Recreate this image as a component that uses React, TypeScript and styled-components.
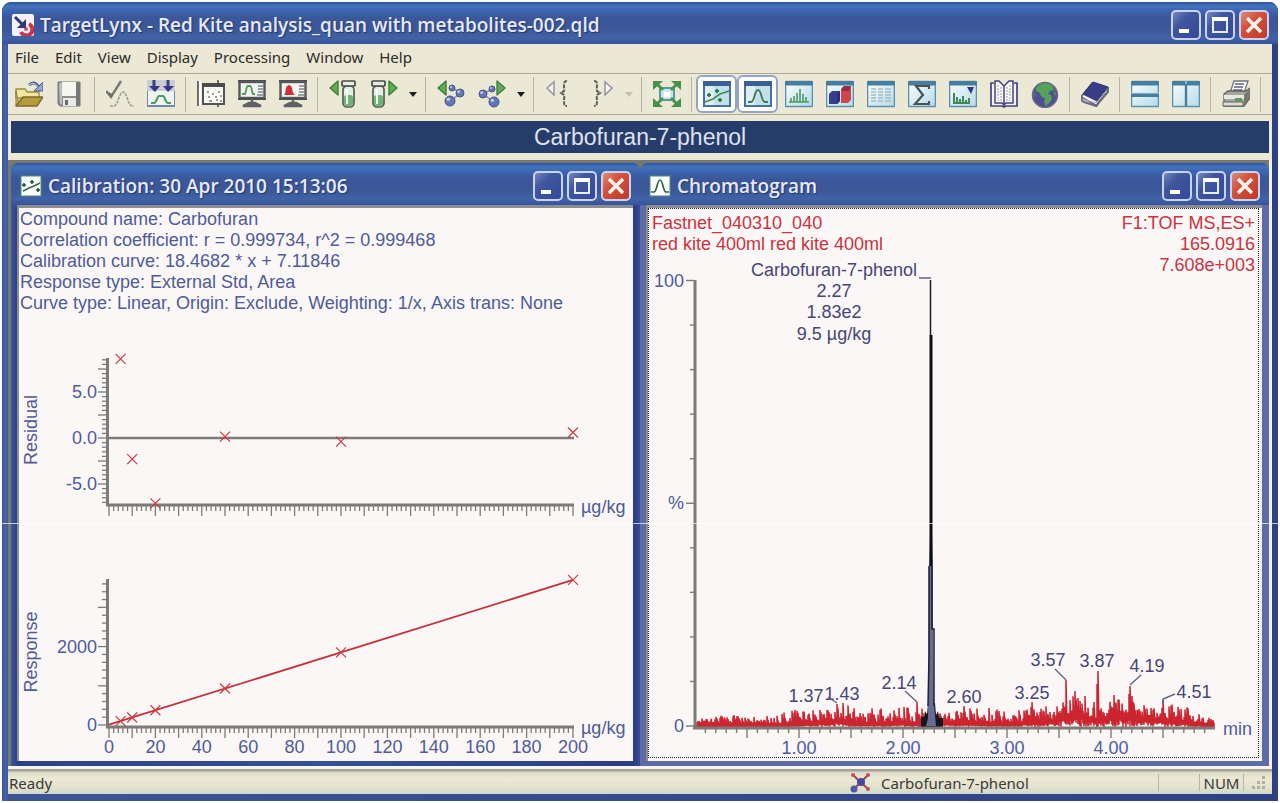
import React from "react";
import styled, { createGlobalStyle, css } from "styled-components";

const sans = `"Liberation Sans", Arial, sans-serif`;
const ui = `"Noto Sans", Tahoma, sans-serif`;
const caption = `"Open Sans", "Trebuchet MS", sans-serif`;

const cream = "#ebe8d5";
const paper = "#fbf7f6";
const navyInk = "#4f5b9a";
const peakInk = "#464676";
const axisGray = "#7b7b79";
const red = "#cf3a42";

const GlobalStyle = createGlobalStyle`
  * { box-sizing: border-box; }
  body { margin: 0; background: #fff; }
  button { font: inherit; color: inherit; border: 0; padding: 0; background: none; }
  p { margin: 0; }
`;

/* ---------- window chrome ---------- */

const titleFill = css`
  background: linear-gradient(#2d529c 0, #4273bd 4px, #3c64ad 9px, #3b5699 16px, #3c5899 28px, #4063a6 36px, #36529a 100%);
`;

const Page = styled.div`
  position: relative;
  min-height: 100vh;
  padding: 2px;
  display: flex;
`;

const Frame = styled.main`
  flex: 1;
  min-width: 0;
  display: flex;
  flex-direction: column;
  border-radius: 9px 9px 0 0;
  background: linear-gradient(90deg, #3a5596, #4767a9 4px, #3b5595 6px, #2e4184 100%);
  overflow: hidden;
`;

const Scanline = styled.div`
  position: absolute;
  left: 0;
  right: 0;
  top: 523px;
  height: 1px;
  background: rgba(255, 255, 255, 0.7);
  pointer-events: none;
`;

const TitleBar = styled.header<{ $child?: boolean }>`
  ${titleFill}
  height: 42px;
  flex: none;
  display: flex;
  align-items: center;
  gap: 6px;
  padding: ${(p) => (p.$child ? "4px 9px 0 9px" : "4px 9px 0 10px")};
`;

const Caption = styled.h1`
  flex: 1;
  margin: 0;
  white-space: nowrap;
  overflow: hidden;
  font: 600 19px/28px ${caption};
  color: #e6e9f6;
  text-shadow: 1px 1px 1px #22376f;
`;

const Controls = styled.div`
  display: flex;
  gap: 4px;
`;

const ControlButton = styled.button<{ $close?: boolean }>`
  width: 30px;
  height: 30px;
  border: 2px solid #c9d2ee;
  border-radius: 5px;
  display: grid;
  place-items: center;
  background: ${(p) =>
    p.$close
      ? "linear-gradient(135deg, #e08a7a, #d2503c 40%, #bf3a28)"
      : "linear-gradient(135deg, #7387c0, #40569d 35%, #34499a)"};
`;

const Inner = styled.div`
  flex: 1;
  margin: 0 6px 7px;
  display: flex;
  flex-direction: column;
  background: ${cream};
`;

/* ---------- menu, toolbar, banner ---------- */

const MenuBar = styled.nav`
  height: 30px;
  padding: 0 0 3px 7px;
  display: flex;
  align-items: center;
  gap: 16px;
  border-bottom: 1px solid #a9a899;
  font: 15px/20px ${ui};
  color: #2b2b28;
`;

const ToolBar = styled.div`
  height: 41px;
  display: flex;
  align-items: center;
  border-bottom: 1px solid #a9a899;
`;

const ToolButton = styled.button<{ $on?: boolean; $narrow?: boolean }>`
  width: ${(p) => (p.$narrow ? 17 : 41)}px;
  height: 38px;
  flex: none;
  display: grid;
  place-items: center;
  ${(p) =>
    p.$on &&
    css`
      background: #fbfbf9;
      border: 2px solid #94a5c2;
      border-radius: 6px;
    `}
`;

const Divider = styled.span`
  width: 1px;
  height: 35px;
  margin: 0 4px;
  flex: none;
  background: #b7b5a4;
`;

const Banner = styled.div`
  margin: 6px 3px 7px;
  background: #263c6b;
  color: #dfe2ee;
  text-align: center;
  font: 23px/32px ${sans};
`;

/* ---------- document area ---------- */

const Workspace = styled.section`
  flex: 1;
  display: flex;
  padding: 3px 0 0 3px;
  border-right: 3px solid #f1efe6;
  background: #77786f;
`;

const ChildWindow = styled.article<{ $edge: string }>`
  flex: 1 1 0;
  min-width: 0;
  display: flex;
  flex-direction: column;
  border-radius: 8px 8px 0 0;
  overflow: hidden;
  background: ${(p) => p.$edge};
`;

const Client = styled.div`
  flex: 1;
  min-width: 0;
  margin: 0 7px 5px 6px;
  border-left: 2px solid #8b8d90;
  border-top: 3px solid #8b8d90;
  background: ${paper};
`;

const Summary = styled.div`
  padding: 1px 0 0 1px;
  font: 18px/21px ${sans};
  color: ${navyInk};
  white-space: nowrap;
`;

const FocusBox = styled.div`
  margin: 0 3px 3px 0;
  border: 1px dotted #22222c;
  display: grid;
`;

const TraceHeader = styled.div`
  grid-area: 1 / 1;
  display: flex;
  justify-content: space-between;
  padding: 4px 3px 0;
  font: 18px/21px ${sans};
  color: #cb333e;
  white-space: nowrap;
`;

const RightLines = styled.div`
  text-align: right;
`;

const Plot = styled.svg`
  display: block;
  width: 100%;
  height: auto;
  grid-area: 1 / 1;
  font: 18px ${sans};
`;

/* ---------- status bar ---------- */

const StatusBar = styled.footer`
  border-top: 3px solid #f6f5f0;
  background: linear-gradient(#a3a294 0, #a3a294 2px, #dcdac4 3px, ${cream} 9px, #e4e1cb 19px, #cdd9cd 100%);
  height: 28px;
  padding: 2px 1px 0 1px;
  display: flex;
  align-items: center;
  font: 15px/20px ${ui};
  color: #3a3a35;
`;

const StatusText = styled.span`
  flex: 1;
`;

const StatusCompound = styled.span`
  display: flex;
  align-items: center;
  gap: 10px;
  width: 308px;
`;

const StatusCell = styled.span<{ $w: number }>`
  width: ${(p) => p.$w}px;
  height: 17px;
  border-left: 1px solid #b7b5a4;
  display: flex;
  align-items: center;
  justify-content: center;
`;

/* ---------- icons ---------- */

const Icon = ({ children, size = 28 }: { children: React.ReactNode; size?: number }) => (
  <svg width={size} height={size} viewBox="0 0 28 28" fill="none" aria-hidden="true">
    {children}
  </svg>
);

const Pane = ({ children }: { children?: React.ReactNode }) => (
  <Icon>
    <defs>
      <linearGradient id="pane" x1="0" y1="0" x2="1" y2="1">
        <stop offset="0" stopColor="#fbfdfd" />
        <stop offset="1" stopColor="#b5dbe9" />
      </linearGradient>
    </defs>
    <rect x="0.5" y="1.5" width="27" height="25" rx="1" fill="url(#pane)" stroke="#5b8fb0" strokeWidth="1.6" />
    <rect x="0" y="1" width="28" height="4.5" rx="1" fill="#457e9f" />
    {children}
  </Icon>
);

const NavyPane = ({ children }: { children?: React.ReactNode }) => (
  <Icon>
    <rect x="1" y="2" width="26" height="24" fill="#c2e0ea" stroke="#4a6f9e" strokeWidth="2" />
    <rect x="2" y="6" width="9" height="19" fill="#e6f3f5" opacity=".7" />
    <rect x="0" y="1" width="28" height="5" fill="#3c5f95" />
    {children}
  </Icon>
);

const OpenIcon = () => (
  <Icon>
    <path d="M1 9h9l2 3h12v6H1z" fill="#f2e6a0" stroke="#9c8a40" strokeWidth="1.3" />
    <path d="M1 26V11l3 14z" fill="#d8c66a" stroke="#8d7a32" />
    <path d="M8 17h20l-6 9H1z" fill="#b69b3c" stroke="#7d6a28" strokeWidth="1.4" strokeLinejoin="round" />
    <path d="M14 5q5-5 10 2" stroke="#4c5c8c" strokeWidth="3" />
    <path d="M14 5q5-4 9 2" stroke="#b4c4e2" strokeWidth="1.2" />
    <path d="M28 2v9h-9z" fill="#8fa6d2" stroke="#4c5c8c" />
  </Icon>
);

const SaveIcon = () => (
  <Icon>
    <path d="M2 2h22v24H4l-2-2z" fill="#8d8d8e" stroke="#77777a" />
    <path d="M3 3h3v21H4z" fill="#bdbdbd" />
    <rect x="6" y="2" width="14" height="14" fill="#f5f5f2" />
    <rect x="7" y="18" width="13" height="8" fill="#e9e9e6" />
    <rect x="9" y="20" width="3" height="5" fill="#6b6b6d" />
    <path d="M20 3h4v22h-4z" fill="#77777a" />
  </Icon>
);

const CheckPeakIcon = () => (
  <Icon>
    <path d="M0 11l5 6L15 1" stroke="#767a74" strokeWidth="2.4" />
    <path d="M1 11l5 3-1 4z" fill="#6b6f6a" />
    <path d="M4 26h4c4 0 5-14 9-14s5 14 9 14h2" stroke="#9a9c98" strokeWidth="1.6" strokeDasharray="3 1" />
  </Icon>
);

const ImportPeakIcon = () => (
  <Icon>
    <rect x="0" y="0" width="28" height="12" fill="#c9ccd4" />
    <path d="M0 11v15h28V11" fill="#edf5f0" stroke="#7488ac" strokeWidth="2" />
    <path d="M7 0v8M21 0v8" stroke="#3b3f86" strokeWidth="3" />
    <path d="M2 6h11l-5 6zM16 6h11l-6 6z" fill="#34387e" />
    <path d="M4 23h3c3 0 3-7 5-7h4c2 0 2 7 5 7h3" stroke="#4f9a60" strokeWidth="2.2" />
  </Icon>
);

const ReportIcon = () => (
  <Icon>
    <path d="M1 1v25M21 0v27" stroke="#4e4e4e" strokeWidth="1.6" />
    <path d="M2 1h2v25H2z" fill="#fff" />
    <rect x="6" y="4" width="21" height="20" fill="#f9f9f6" stroke="#545454" strokeWidth="2" />
    <path d="M5 5h23" stroke="#4c4c4c" strokeWidth="4" />
    <path d="M10 12h2m3 2h2m4-2h2m-12 5h2m5 0h2m3-1h2m-13 5h3m4-1h2m2 1h2" stroke="#7f7f7f" strokeWidth="1.6" />
  </Icon>
);

const Monitor = ({ children }: { children: React.ReactNode }) => (
  <Icon>
    <path d="M0 1h30" stroke="#4c4f50" strokeWidth="3" />
    <rect x="1.5" y="2" width="25" height="16" fill="#f3f4f0" stroke="#55585a" strokeWidth="2.4" />
    <path d="M0 19h28" stroke="#4c4f50" strokeWidth="2" />
    <path d="M14 19v5M5 26l6-3h6l6 3z" fill="#5e6264" stroke="#5e6264" strokeWidth="2.4" />
    <path d="M20 6h5M20 9h5M20 12h5M19 15h6" stroke="#7b8488" strokeWidth="1.3" />
    {children}
  </Icon>
);

const Tube = ({ x }: { x: number }) => (
  <g>
    <rect x={x} y="6" width="11" height="21" rx="4" fill="#e4f0e3" stroke="#50604f" strokeWidth="1.7" />
    <rect x={x + 1} y="15" width="9" height="11" rx="3" fill="#6fb376" />
    <path d={`M${x + 4} 9v15`} stroke="#fff" strokeWidth="1.8" />
    <rect x={x - 1} y="1" width="13" height="5" rx="1" fill="#e6ebe4" stroke="#454b45" strokeWidth="1.7" />
  </g>
);

const green = { fill: "#63ac55", stroke: "#3c8338", strokeWidth: 1.4, strokeLinejoin: "round" as const };

const Ball = ({ x, y, r }: { x: number; y: number; r: number }) => (
  <g>
    <circle cx={x} cy={y} r={r} fill="#6277b4" stroke="#475690" />
    <circle cx={x - r / 3} cy={y - r / 3} r={r / 3} fill="#c3cfec" />
  </g>
);

const BackArrow = () => <path d="M9 1v14L1 8z" {...green} />;
const ForwardArrow = () => <path d="M19 1v14l8-7z" {...green} />;

const FitIcon = () => (
  <Icon>
    <rect x="7" y="8" width="14" height="12" fill="#cfe6ea" stroke="#5d9aa0" strokeWidth="2" />
    <path d="M2 2l8 8M26 2l-8 8M2 26l8-8M26 26l-8-8" stroke="#4b9150" strokeWidth="3" />
    <path d="M0 1h10L0 10zM28 1H18l10 9zM0 27h10L0 18zM28 27H18l10-9z" fill="#47904b" />
    <rect x="11" y="12" width="6" height="5" fill="#fff" />
  </Icon>
);

const ScatterIcon = () => (
  <NavyPane>
    <path d="M2 22l8-3 7-5 9-3" stroke="#428a58" strokeWidth="1.6" />
    <path d="M4 15h4m-2-2v4M12 11h4m-2-2v4M15 20h4m-2-2v4" stroke="#2f7848" strokeWidth="1.8" />
  </NavyPane>
);

const PeakIcon = () => (
  <NavyPane>
    <path d="M4 22h3c4 0 3-12 7-12s3 12 7 12h3" stroke="#3c7a56" strokeWidth="1.8" />
  </NavyPane>
);

const SpectrumIcon = () => (
  <Pane>
    <path d="M4 22h20M6 22v-4m3 4v-6m3 6v-9m3 9V9m3 13v-8m3 8v-5" stroke="#4a9a64" strokeWidth="1.6" />
  </Pane>
);

const BlocksIcon = () => (
  <Pane>
    <path d="M3 14l3-3h8v10l-3 3H3z" fill="#343f92" />
    <path d="M15 9l3-3h7v14l-3 3h-7z" fill="#d2454c" />
    <path d="M16 8l2-2h7l-2 5h-7z" fill="#8e2f46" />
    <path d="M11 14l3-3v10l-3 3z" fill="#2a2f70" />
  </Pane>
);

const TableIcon = () => (
  <Pane>
    <path d="M4 9h5m2 0h5m2 0h6M4 12h5m2 0h5m2 0h6M4 15h5m2 0h5m2 0h6M4 18h5m2 0h5m2 0h6M4 21h5m2 0h5m2 0h6" stroke="#a8bcc4" strokeWidth="1.5" />
  </Pane>
);

const SigmaIcon = () => (
  <Pane>
    <path d="M21 9V6H8l7 9-8 9h14v-3" stroke="#4b5450" strokeWidth="2.2" />
  </Pane>
);

const FilterIcon = () => (
  <Pane>
    <path d="M4 23h17M5 23V13m3 10v-6m3 6v-4m3 4v-7m3 7v-3m3 3v-5" stroke="#3f8a52" strokeWidth="2" />
    <path d="M18 7h7l-3 7z" fill="#33377e" />
  </Pane>
);

const OpenBookIcon = () => (
  <Icon>
    <path d="M4 3H1v23h11l2 1 2-1h11V3h-3" stroke="#47427e" strokeWidth="1.7" fill="#f5f4f4" />
    <path d="M14 25V6L9 1H5v22h7zM14 25V6l5-5h4v22h-7z" fill="#fbfbfb" stroke="#47427e" strokeWidth="1.5" />
    <path d="M8 5v16m3-14v14M17 7v14m3-16v16" stroke="#9a9aac" strokeDasharray="2 1" />
  </Icon>
);

const GlobeIcon = () => (
  <Icon>
    <circle cx="14" cy="15" r="12.5" fill="#514f94" stroke="#6c6a83" strokeWidth="1.5" />
    <path d="M5 8l4-4 6-1 6 2 2 5-4 1-2 3 3 1 1 4-3 4-3 3-2-4 1-3-4-3-1-3-4-2z" fill="#55a358" />
    <path d="M3 12l2 3-1 2zM23 9l2 4-1 4-1-3z" fill="#4b9356" />
  </Icon>
);

const BookIcon = () => (
  <Icon>
    <path d="M0 17L11 3l17 5-11 15-1 3z" fill="#f1f0ee" stroke="#65617a" strokeWidth="1.5" />
    <path d="M2 14L12 2l15 5-11 14z" fill="#383d86" stroke="#2c3170" />
    <path d="M1 15q-2 5 2 7l12 4 12-14V8" stroke="#6c6a7c" strokeWidth="2" />
    <path d="M4 20l11 3L26 11" stroke="#a8a6ae" />
  </Icon>
);

const TileRowsIcon = () => (
  <Pane>
    <path d="M0 15h28" stroke="#457e9f" strokeWidth="4" />
    <path d="M0 13h28" stroke="#c6dde6" strokeWidth="1" />
  </Pane>
);

const TileColumnsIcon = () => (
  <Pane>
    <path d="M14 2v24" stroke="#457e9f" strokeWidth="2.4" />
    <path d="M14 1v3" stroke="#d8eaf0" />
  </Pane>
);

const PrinterIcon = () => (
  <Icon>
    <path d="M8 13L12 1h14l-4 12z" fill="#fcfcfc" stroke="#73747c" strokeWidth="1.3" />
    <path d="M13 4h9m-10 3h9m-10 3h9" stroke="#5c6088" strokeWidth="1.3" />
    <path d="M2 14l4-3h18l4-3v10l-6 8H2z" fill="#a7a79f" stroke="#61625c" strokeWidth="1.3" />
    <path d="M2 15h20v4H2z" fill="#e9e9e4" />
    <path d="M13 18h7v3h-7z" fill="#5c9c58" />
    <path d="M1 22h20v4H1z" fill="#dedfd8" stroke="#61625c" />
    <path d="M22 15l6-6v8l-6 8z" fill="#77786f" />
  </Icon>
);

const Caret = ({ dim }: { dim?: boolean }) => (
  <svg width="8" height="5" viewBox="0 0 8 5" aria-hidden="true">
    <path d="M0 0h8L4 5z" fill={dim ? "#c3c1ae" : "#1d1d1b"} />
  </svg>
);

const AppIcon = () => (
  <svg width="22" height="22" viewBox="0 0 22 22" aria-hidden="true">
    <rect width="22" height="22" rx="2" fill="#f6f1f6" />
    <path d="M17 10a6 6 0 1 1-8 8" fill="none" stroke="#c9344a" strokeWidth="4" />
    <circle cx="14" cy="15" r="2" fill="#d45363" />
    <path d="M3 3l9 9" stroke="#2c3a78" strokeWidth="3" />
    <path d="M14 5v9H5z" fill="#2c3a78" />
  </svg>
);

const CalibrationBadge = () => (
  <svg width="22" height="22" viewBox="0 0 22 22" fill="none" aria-hidden="true">
    <rect x="1" y="1" width="20" height="20" fill="#fafdf9" stroke="#4c8f77" strokeWidth="1" />
    <path d="M3 16l6-3 5-2 6-3" stroke="#2f6b48" strokeWidth="1.5" />
    <path d="M2 10h4m-2-2v4M10 7h4m-2-2v4M16 15h4m-2-2v4" stroke="#24583b" strokeWidth="1.6" />
  </svg>
);

const PeakBadge = () => (
  <svg width="22" height="22" viewBox="0 0 22 22" fill="none" aria-hidden="true">
    <rect x="1" y="1" width="20" height="20" fill="#fafdf9" stroke="#4c8f77" strokeWidth="1" />
    <path d="M2 17h3c3 0 3-12 6-12s3 12 6 12h3" stroke="#35604c" strokeWidth="1.7" />
  </svg>
);

const MoleculeIcon = () => (
  <svg width="21" height="21" viewBox="0 0 21 21" aria-hidden="true">
    <path d="M3 3l15 14M18 3L4 17" stroke="#a8434c" strokeWidth="2" />
    <circle cx="3" cy="3" r="2" fill="#b9525a" />
    <circle cx="18" cy="3" r="2" fill="#b9525a" />
    <circle cx="18" cy="17" r="2" fill="#b9525a" />
    <circle cx="11" cy="10" r="4" fill="#4149a0" />
    <circle cx="4" cy="17" r="3.5" fill="#5058a8" />
  </svg>
);

/* ---------- shared parts ---------- */

const WindowControls = () => (
  <Controls>
    <ControlButton aria-label="Minimize">
      <svg width="26" height="26" viewBox="0 0 26 26" aria-hidden="true">
        <rect x="6" y="17" width="10" height="4" fill="#fff" />
      </svg>
    </ControlButton>
    <ControlButton aria-label="Maximize">
      <svg width="26" height="26" viewBox="0 0 26 26" aria-hidden="true">
        <path d="M6 6h14v14H6z" fill="none" stroke="#e8ecf9" strokeWidth="2" />
        <path d="M5 7h16" stroke="#fff" strokeWidth="4" />
      </svg>
    </ControlButton>
    <ControlButton $close aria-label="Close">
      <svg width="26" height="26" viewBox="0 0 26 26" aria-hidden="true">
        <path d="M6 6l14 14M20 6L6 20" stroke="#fff5ee" strokeWidth="3.5" />
      </svg>
    </ControlButton>
  </Controls>
);

const range = (from: number, to: number, step: number) =>
  Array.from({ length: Math.round((to - from) / step) + 1 }, (_, i) => from + i * step);

/* ---------- calibration plots ---------- */

const conc = (v: number) => 109 + v * 2.32;
const residual = (v: number) => 438 - v * 9.2;
const response = (v: number) => 725 - v * 0.0392;

const Cross = ({ x, y }: { x: number; y: number }) => (
  <path d={`M${x - 5} ${y - 5}l10 10m0-10l-10 10`} stroke={red} strokeWidth="1.2" />
);

const ConcAxis = ({ y }: { y: number }) => (
  <g stroke={axisGray}>
    <path d={`M106 ${y}H574`} strokeWidth="3" />
    {range(0, 200, 2).map((v) => (
      <path key={v} d={`M${conc(v)} ${y}v${v % 10 ? 6 : 11}`} strokeWidth="1.3" />
    ))}
  </g>
);

const CalibrationPlot = () => (
  <Plot viewBox="19 314 614 447" role="img" aria-label="Residual and response against concentration" fill={navyInk}>
    <path d="M107.5 358V506M107.5 579V728" stroke={axisGray} strokeWidth="3" />
    <path d="M107 438H574" stroke={axisGray} strokeWidth="2.6" />
    {range(-7, 8.5, 0.5).map((v) => (
      <path key={v} d={`M106 ${residual(v)}h${v % 2.5 ? -4 : -8}`} stroke={axisGray} strokeWidth="1.3" />
    ))}
    {range(0, 3600, 200).map((v) => (
      <path key={v} d={`M106 ${response(v)}h${v % 1000 ? -4 : -8}`} stroke={axisGray} strokeWidth="1.3" />
    ))}
    <ConcAxis y={505} />
    <ConcAxis y={727} />
    {[5, 0, -5].map((v) => (
      <text key={v} x="97" y={residual(v) + 6} textAnchor="end">{v.toFixed(1)}</text>
    ))}
    {[2000, 0].map((v) => (
      <text key={v} x="97" y={response(v) + 6} textAnchor="end">{v}</text>
    ))}
    {range(0, 200, 20).map((v) => (
      <text key={v} x={conc(v)} y="753" textAnchor="middle">{v}</text>
    ))}
    <text x="581" y="513">µg/kg</text>
    <text x="581" y="734">µg/kg</text>
    <text transform="translate(37 430) rotate(-90)" textAnchor="middle">Residual</text>
    <text transform="translate(37 652) rotate(-90)" textAnchor="middle">Response</text>
    {[[5, 8.6], [10, -2.3], [20, -7.1], [50, 0.15], [100, -0.4], [200, 0.6]].map(([x, v]) => (
      <Cross key={x} x={conc(x)} y={residual(v)} />
    ))}
    <path d={`M109 ${response(7)}L${conc(200)} ${response(3701)}`} stroke="#c42f3a" strokeWidth="1.8" />
    {[5, 10, 20, 50, 100, 200].map((x) => (
      <Cross key={x} x={conc(x)} y={response(18.4682 * x + 7.11846)} />
    ))}
  </Plot>
);

/* ---------- chromatogram ---------- */

const minute = (t: number) => 695 + t * 104;

// [minute, floor, height] of the noise band, interpolated between the rows
const band = [
  [0, 0, 5], [0.3, 0, 8], [0.8, 0, 10], [1, 1, 15], [1.2, 2, 13], [1.4, 4, 16], [1.6, 1, 14], [2, 2, 16], [2.15, 1, 15],
  [2.4, 2, 12], [2.6, 2, 14], [2.8, 1, 15], [3, 1, 13], [3.4, 3, 15], [3.6, 7, 20], [3.75, 8, 22], [3.85, 4, 16],
  [4.1, 9, 18], [4.3, 6, 14], [4.6, 4, 18], [4.8, 1, 12], [4.9, 0, 6], [5, 0, 5],
];

const spikes: Record<number, number> = {
  837: 704, 843: 703, 917: 702, 964: 706, 989: 708, 1032: 702, 1066: 680, 1075: 691, 1078: 698, 1097: 684, 1098: 671,
  1114: 695, 1129: 694, 1130: 686, 1132: 696, 1163: 700, 1178: 707,
};

const noisePath = () => {
  let seed = 71;
  const rand = () => (seed = (seed * 16807) % 2147483647) / 2147483647;
  let d = "M696 726";
  for (let x = 697; x <= 1214; x += 1) {
    const t = (x - 695) / 104;
    const i = Math.max(1, band.findIndex((b) => b[0] >= t));
    const [a, b] = [band[i - 1], band[i]];
    const k = (t - a[0]) / (b[0] - a[0]);
    const floor = a[1] + (b[1] - a[1]) * k;
    const height = a[2] + (b[2] - a[2]) * k;
    const low = 727 - floor * rand();
    const high = 723 - floor - height * Math.pow(rand(), 1.7);
    d += `L${x} ${low.toFixed(1)}L${x} ${(spikes[x] ?? high).toFixed(1)}`;
  }
  return d;
};

const peakLabels: [string, number, number][] = [
  ["1.37", 806, 702], ["1.43", 842, 700], ["2.14", 899, 689], ["2.60", 964, 703], ["3.25", 1032, 699],
  ["3.57", 1048, 666], ["3.87", 1097, 667], ["4.19", 1147, 672], ["4.51", 1194, 698],
];

const ChromatogramPlot = () => (
  <Plot viewBox="649 209 609 548" role="img" aria-label="Chromatogram of Carbofuran-7-phenol" fill={navyInk}>
    <path d={noisePath()} stroke="#cc2530" strokeWidth="1.5" fill="none" />
    <path d="M921 728v-11h3l1-6 2 4 1-12h7l1 12 2-4 1 7h4v10z" fill="#15151d" />
    <path d="M926 726l2-8 1-152 2-60 2 60v63l1 75 2 22z" fill="#676b96" />
    <path d="M930.5 280v56" stroke="#1b1b28" strokeWidth="1.5" />
    <path d="M931 335v231" stroke="#0d0d14" strokeWidth="3" />
    <path d="M929 566v90l-1 50M932 566v63h2v77" stroke="#20202e" strokeWidth="1.5" fill="none" />
    <path d="M695 280V729M693 728H1215" stroke={axisGray} strokeWidth="3" />
    {range(0, 100, 10).map((v) => (
      <path key={v} d={`M694 ${726 - v * 4.455}h${v % 50 ? -4 : -8}`} stroke={axisGray} strokeWidth="1.4" />
    ))}
    {range(1, 49, 1).map((v) => (
      <path key={v} d={`M${minute(v / 10)} 728v${v % 5 ? 5 : 10}`} stroke={axisGray} strokeWidth="1.4" />
    ))}
    <g textAnchor="end">
      <text x="684" y="287">100</text>
      <text x="684" y="509">%</text>
      <text x="684" y="732">0</text>
    </g>
    {[1, 2, 3, 4].map((t) => (
      <text key={t} x={minute(t)} y="754" textAnchor="middle">{t.toFixed(2)}</text>
    ))}
    <text x="1223" y="735">min</text>
    <g fill={peakInk} textAnchor="middle">
      {peakLabels.map(([label, x, y]) => (
        <text key={label} x={x} y={y}>{label}</text>
      ))}
      <text x="834" y="276">Carbofuran-7-phenol</text>
      <text x="834" y="297">2.27</text>
      <text x="834" y="318">1.83e2</text>
      <text x="834" y="340">9.5 µg/kg</text>
    </g>
    <path
      d="M919 278h12M828 697l9 6M905 691l12 11M1055 669l11 11M1141 675l-11 10M1175 694l-12 5v5"
      stroke="#62628a"
      strokeWidth="1.4"
      fill="none"
    />
  </Plot>
);

/* ---------- page ---------- */

const menus = ["File", "Edit", "View", "Display", "Processing", "Window", "Help"];

const App = () => (
  <Page>
    <GlobalStyle />
    <Frame>
      <TitleBar>
        <AppIcon />
        <Caption>TargetLynx - Red Kite analysis_quan with metabolites-002.qld</Caption>
        <WindowControls />
      </TitleBar>
      <Inner>
        <MenuBar>
          {menus.map((m) => (
            <button key={m}>{m}</button>
          ))}
        </MenuBar>
        <ToolBar role="toolbar" aria-label="Main">
          <ToolButton aria-label="Open"><OpenIcon /></ToolButton>
          <ToolButton aria-label="Save"><SaveIcon /></ToolButton>
          <Divider />
          <ToolButton aria-label="Accept peak"><CheckPeakIcon /></ToolButton>
          <ToolButton aria-label="Process samples"><ImportPeakIcon /></ToolButton>
          <Divider />
          <ToolButton aria-label="Report"><ReportIcon /></ToolButton>
          <ToolButton aria-label="Method view">
            <Monitor><path d="M4 14h3c1 0 1-8 3-8h2c2 0 2 8 3 8h2" stroke="#4a9a58" strokeWidth="1.8" /></Monitor>
          </ToolButton>
          <ToolButton aria-label="Alarms">
            <Monitor><path d="M5 15c3-2 0-9 5-10 5 1 2 8 6 10z" fill="#cf2f38" /></Monitor>
          </ToolButton>
          <Divider />
          <ToolButton aria-label="Previous sample"><Icon><BackArrow /><Tube x={14} /></Icon></ToolButton>
          <ToolButton aria-label="Next sample"><Icon><Tube x={3} /><ForwardArrow /></Icon></ToolButton>
          <ToolButton $narrow aria-label="Sample list"><Caret /></ToolButton>
          <Divider />
          <ToolButton aria-label="Previous compound">
            <Icon>
              <BackArrow />
              <path d="M15 8l9 5-11 8" stroke="#8a8f9c" strokeWidth="1.5" />
              <Ball x={15} y={8} r={3} /><Ball x={23} y={13} r={4} /><Ball x={13} y={21} r={5} />
            </Icon>
          </ToolButton>
          <ToolButton aria-label="Next compound">
            <Icon>
              <path d="M14 9L5 14l11 8" stroke="#8a8f9c" strokeWidth="1.5" />
              <Ball x={14} y={9} r={3} /><Ball x={5} y={14} r={4} /><Ball x={16} y={22} r={5} />
              <ForwardArrow />
            </Icon>
          </ToolButton>
          <ToolButton $narrow aria-label="Compound list"><Caret /></ToolButton>
          <Divider />
          <ToolButton aria-label="Previous group">
            <Icon>
              <path d="M9 2v13L2 8z" fill="#f4f4f2" stroke="#95979a" strokeWidth="1.5" />
              <path d="M22 1c-5 0-2 7-3 10l-3 2 3 2c1 4-2 11 3 11" stroke="#5d5f5b" strokeWidth="2" strokeDasharray="4 1" />
            </Icon>
          </ToolButton>
          <ToolButton aria-label="Next group">
            <Icon>
              <path d="M8 1c5 0 2 7 3 10l3 2-3 2c-1 4 2 11-3 11" stroke="#5d5f5b" strokeWidth="2" strokeDasharray="4 1" />
              <path d="M19 2v13l7-7z" fill="#f4f4f2" stroke="#95979a" strokeWidth="1.5" />
            </Icon>
          </ToolButton>
          <ToolButton $narrow disabled aria-label="Group list"><Caret dim /></ToolButton>
          <Divider />
          <ToolButton aria-label="Fit to window"><FitIcon /></ToolButton>
          <Divider />
          <ToolButton $on aria-pressed="true" aria-label="Calibration"><ScatterIcon /></ToolButton>
          <ToolButton $on aria-pressed="true" aria-label="Chromatogram"><PeakIcon /></ToolButton>
          <ToolButton aria-label="Spectrum"><SpectrumIcon /></ToolButton>
          <ToolButton aria-label="Statistics"><BlocksIcon /></ToolButton>
          <ToolButton aria-label="Results table"><TableIcon /></ToolButton>
          <ToolButton aria-label="Summary"><SigmaIcon /></ToolButton>
          <ToolButton aria-label="Audit plot"><FilterIcon /></ToolButton>
          <ToolButton aria-label="Method editor"><OpenBookIcon /></ToolButton>
          <ToolButton aria-label="Web"><GlobeIcon /></ToolButton>
          <Divider />
          <ToolButton aria-label="Library"><BookIcon /></ToolButton>
          <Divider />
          <ToolButton aria-label="Tile horizontally"><TileRowsIcon /></ToolButton>
          <ToolButton aria-label="Tile vertically"><TileColumnsIcon /></ToolButton>
          <Divider />
          <ToolButton aria-label="Print"><PrinterIcon /></ToolButton>
          <Divider />
        </ToolBar>
        <Banner>Carbofuran-7-phenol</Banner>
        <Workspace>
          <ChildWindow $edge="linear-gradient(90deg, #3b599c, #2b4287 6px, #34509a 50%, #2b3d85 99%, #3a4a94)">
            <TitleBar $child>
              <CalibrationBadge />
              <Caption as="h2">Calibration: 30 Apr 2010 15:13:06</Caption>
              <WindowControls />
            </TitleBar>
            <Client>
              <Summary>
                <p>Compound name: Carbofuran</p>
                <p>Correlation coefficient: r = 0.999734, r^2 = 0.999468</p>
                <p>Calibration curve: 18.4682 * x + 7.11846</p>
                <p>Response type: External Std, Area</p>
                <p>Curve type: Linear, Origin: Exclude, Weighting: 1/x, Axis trans: None</p>
              </Summary>
              <CalibrationPlot />
            </Client>
          </ChildWindow>
          <ChildWindow $edge="#5f6ba6">
            <TitleBar $child>
              <PeakBadge />
              <Caption as="h2">Chromatogram</Caption>
              <WindowControls />
            </TitleBar>
            <Client>
              <FocusBox>
                <TraceHeader>
                  <div>
                    <p>Fastnet_040310_040</p>
                    <p>red kite 400ml red kite 400ml</p>
                  </div>
                  <RightLines>
                    <p>F1:TOF MS,ES+</p>
                    <p>165.0916</p>
                    <p>7.608e+003</p>
                  </RightLines>
                </TraceHeader>
                <ChromatogramPlot />
              </FocusBox>
            </Client>
          </ChildWindow>
        </Workspace>
        <StatusBar>
          <StatusText>Ready</StatusText>
          <StatusCompound>
            <MoleculeIcon />
            Carbofuran-7-phenol
          </StatusCompound>
          <StatusCell $w={41} />
          <StatusCell $w={44}>NUM</StatusCell>
          <StatusCell $w={28}>
            <svg width="20" height="17" viewBox="0 0 20 17" fill="#b0ae9c" aria-hidden="true">
              <path d="M14 2h3v3h-3zM9 7h3v3H9zM14 7h3v3h-3zM4 12h3v3H4zM9 12h3v3H9zM14 12h3v3h-3z" />
            </svg>
          </StatusCell>
        </StatusBar>
      </Inner>
    </Frame>
    <Scanline />
  </Page>
);

export default App;
